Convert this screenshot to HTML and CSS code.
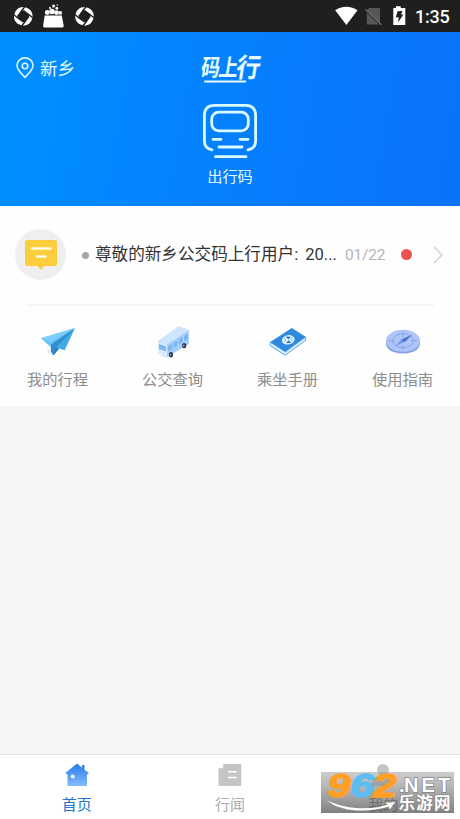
FILE: index.html
```html
<!DOCTYPE html>
<html lang="zh-CN">
<head>
<meta charset="utf-8">
<title>码上行</title>
<link rel="stylesheet" href="styles.css">
</head>
<body>
<div class="app">
  <header class="status">
    <svg width="100" height="32" viewBox="0 0 100 32">
      <defs>
        <path id="blade" d="M-8.800-2C-8-7.500-2.500-10.300 2-9L5.500-4.500C1.500-7-3-6.500-5.200-1.500z" fill="#fff"/>
        <g id="swirl">
          <use href="#blade"/><use href="#blade" transform="rotate(90)"/><use href="#blade" transform="rotate(180)"/><use href="#blade" transform="rotate(270)"/>
          <path d="M-9.500-1.500-4.500 2.500M9.500 1.500 4.500-2.500M1.500-9.500-2.500-4.500M-1.500 9.500 2.500 4.500" stroke="#1f1f1f" stroke-width="1.400"/>
        </g>
      </defs>
      <use href="#swirl" x="23.3" y="16.3"/>
      <use href="#swirl" x="84.5" y="16.3"/>
      <g fill="#fff">
        <path d="M44.7 15.5h17.1l1.9 10.3q.1 1.6-1.5 1.6H44.6q-1.6 0-1.5-1.6z"/>
        <circle cx="47.3" cy="12.5" r="2.4"/><circle cx="52" cy="11.5" r="2.7"/><circle cx="56.5" cy="12.6" r="2.4"/><circle cx="60.2" cy="12.8" r="1.9"/>
        <circle cx="50" cy="8" r="1.1"/><circle cx="53.6" cy="6" r="1.5"/><circle cx="56.8" cy="8.3" r="1.4"/><circle cx="57.3" cy="5" r=".7"/>
      </g>
      <path d="M45 15.2h16.5" stroke="#999" stroke-width=".6"/>
    </svg>
    <div class="status-right">
      <svg width="74" height="32" viewBox="0 0 74 32">
        <path d="M.2 10.3C6.5 5.5 16.2 5.5 22.5 10.3L11.4 25z" fill="#fff"/>
        <path d="M34 8h11v15.4L32.3 10.6zM31.8 12.5 44 24.4H31.8z" fill="#575757"/>
        <path d="m30.5 9.2 15.8 15.5" stroke="#6b6b6b" stroke-width="1.5"/>
        <path d="M58.3 8.1h2.6V6.3h4.8v1.8h4.6v16.8H58.3z" fill="#fff"/>
        <path d="m62.5 11.2 5-.3-1.5 3.7h2.4l-5.4 8 .8-5.4-3 .2z" fill="#1f1f1f"/>
      </svg>
      <span class="clock">1:35</span>
    </div>
  </header>

  <section class="hero">
    <div class="city">
      <svg width="18" height="22" viewBox="0 0 18 22" fill="none" stroke="#d9f8ff" stroke-width="1.6">
        <path d="M9 20.3C5.2 16.8 1 12.6 1 8.6a8 7.7 0 0 1 16 0c0 4-4.2 8.2-8 11.7z"/>
        <circle cx="9" cy="9" r="2.8"/>
      </svg>
      <span>新乡</span>
    </div>
    <div class="center">
      <svg class="brand" width="64" height="34" viewBox="0 0 64 34">
        <g transform="skewX(-9)">
          <text transform="translate(6 25) scale(.86 1.08)">码</text>
          <text transform="translate(24 25) scale(.86 1.06)">上</text>
          <text transform="translate(41 25.5) scale(1.1 1.2)">行</text>
          <path d="M11 30.500h42" stroke="#e5fbff" stroke-width="2"/>
        </g>
      </svg>
      <svg class="train" width="56" height="56" viewBox="0 0 56 56" fill="none" stroke="#d9fbff" stroke-width="2.8" stroke-linecap="round" stroke-linejoin="round">
        <path d="M10 46.8Q2.4 45.5 2.4 38V12.5Q2.4 2.4 12.5 2.4h31Q53.6 2.4 53.6 12.5V38q0 7.5-7.6 8.8"/>
        <rect x="9.7" y="9.2" width="36.6" height="18.6" rx="7"/>
        <path d="M11 36.3h8M38 36.3h8M17 44h23M13.5 53.7h30.5"/>
      </svg>
      <span class="code-label">出行码</span>
    </div>
  </section>

  <main class="card">
    <div class="notice">
      <div class="notice-icon">
        <svg width="34" height="32" viewBox="0 0 34 32">
          <path d="M3 1h28q2 0 2 2v22q0 2-2 2H20.5L17 30.7 13.5 27H3q-2 0-2-2V3q0-2 2-2z" fill="#fccd3d"/>
          <path d="M8 9.5h18.5M13 17.5h8.5" stroke="#fffbe5" stroke-width="2.5" stroke-linecap="round"/>
        </svg>
      </div>
      <i class="dot"></i>
      <span class="notice-text">尊敬的新乡公交码上行用户<span class="colon">:</span><span class="year">20...</span></span>
      <span class="date">01/22</span>
      <i class="unread"></i>
      <svg class="chevron" width="10" height="18" viewBox="0 0 10 18" fill="none" stroke="#d2d2d2" stroke-width="1.5"><path d="m1 1 8 8-8 8"/></svg>
    </div>
    <div class="divider"></div>
    <nav class="services">
      <a class="service">
        <svg width="40" height="34" viewBox="0 0 40 34">
          <path d="M9 21l5 7-4-1z" fill="#e9e9e9"/>
          <path d="M3 12.3 37 2 13 21.2z" fill="#63c1f3"/>
          <path d="M13 18.5 37 2 15.2 29.5 12.7 25z" fill="#338dcc"/>
          <path d="M18 21.5 37 2 26.7 24.2z" fill="#43aae8"/>
          <path d="m17.8 22 3 1.1-5.6 6.4z" fill="#257bb6"/>
          <path d="M3 12.3 13 16 37 2z" fill="#7acffb"/>
        </svg>
        <span>我的行程</span>
      </a>
      <a class="service">
        <svg width="40" height="34" viewBox="0 0 40 34">
          <path d="m7 30 6 2L36 18v-4z" fill="#e8eaf0"/>
          <path d="M5 15.5 25.5.5 35.8 4v14L14 31 5 27z" fill="#a5cef9"/>
          <path d="M5 15 25.5.4 36 4 14 18.5z" fill="#cee4ff"/>
          <path d="m5 15.5 9 3V31l-9-4z" fill="#d9ebff"/>
          <path d="m6 18 7 2.5v5L6 23z" fill="#7eb5f3"/>
          <path d="m15 20.2 20-12.6v5.2L15 25.5z" fill="#7eb6f3"/>
          <path d="M20 17v5.5M25.2 13.5v6M30.4 10.2V16" stroke="#bddcff"/>
          <ellipse cx="18" cy="28.8" rx="2.1" ry="2.7" fill="#27394e"/><ellipse cx="31.2" cy="19.6" rx="2.1" ry="2.7" fill="#27394e"/>
          <circle cx="17.6" cy="28.8" r=".8" fill="#b8c9db"/><circle cx="30.8" cy="19.6" r=".8" fill="#b8c9db"/>
        </svg>
        <span>公交查询</span>
      </a>
      <a class="service">
        <svg width="40" height="34" viewBox="0 0 40 34">
          <path d="m2.3 16.2 15 9.5L37.5 11v3.5L17.3 29.2 2.3 19.7z" fill="#d6efff" stroke="#3b94d9" stroke-width=".8"/>
          <path d="M2.3 16 23.8 2 37.6 10.7 17.3 25.7z" fill="#2e89df"/>
          <ellipse cx="20.3" cy="13.8" rx="6.4" ry="4.6" fill="#e7f7ff" transform="rotate(-12 20.3 13.8)"/>
          <path d="m17.5 10.5 5.5.2-2.6 2.8zM18 17.2l5.5-.4-3.1-2.6z" fill="#2676c6"/>
          <path d="m15.5 12 2.5 2-2 1.5M25 11.5l-2.3 2 2.1 1.5" fill="none" stroke="#5ea5e2" stroke-width=".8"/>
        </svg>
        <span>乘坐手册</span>
      </a>
      <a class="service">
        <svg width="40" height="34" viewBox="0 0 40 34">
          <path d="M3 14.5v3.2c0 6 7.6 9.8 17 9.8s17-3.8 17-9.8v-3.2z" fill="#87a3e6"/>
          <ellipse cx="20" cy="14.7" rx="17" ry="11" fill="#afc4f8"/>
          <ellipse cx="20" cy="14.7" rx="10.5" ry="7" fill="none" stroke="#87a6ec"/>
          <path d="M20 5.5v5M20 19v5M5.5 14.7h6M28.5 14.7h6" stroke="#84a3e9"/>
          <path d="m12.5 20 6-6.5L29 8.8l-6.2 6.8z" fill="#7797e2"/><path d="m18.5 13.5 2.5 2.8 8-7.5z" fill="#4c74cb"/>
        </svg>
        <span>使用指南</span>
      </a>
    </nav>
  </main>

  <footer class="tabs">
    <a class="tab active">
      <svg width="24" height="24" viewBox="0 0 24 24">
        <defs><linearGradient id="home" x2="0" y2="1"><stop stop-color="#267be8"/><stop offset="1" stop-color="#85bbff"/></linearGradient></defs>
        <path d="M12 .5 17 4.7V2h2.5v4.8L23.8 10l-1 1.2H22V23H2.5V11.2h-1L.4 10z" fill="url(#home)"/>
        <circle cx="7.8" cy="13.5" r="2" fill="#e7faff"/>
      </svg>
      <span>首页</span>
    </a>
    <a class="tab">
      <svg width="24" height="24" viewBox="0 0 24 24">
        <path d="M6.2 1H22q1.3 0 1.3 1.3v19.4q0 1.3-1.3 1.3H1.8Q.5 23 .5 21.7V5.3h4.6V2.1Q5.1 1 6.2 1z" fill="#c5c5c5"/>
        <path d="M10 8.7h8.5M10 14.5h8.5" stroke="#fff" stroke-width="1.5"/>
      </svg>
      <span>行闻</span>
    </a>
    <a class="tab">
      <svg width="24" height="24" viewBox="0 0 24 24" fill="#c5c5c5"><circle cx="12" cy="7" r="6"/><path d="M1 23v-3q0-6 6-6h10q6 0 6 6v3z"/></svg>
      <span class="mine">我的</span>
    </a>
  </footer>

  <div class="watermark">
    <svg width="133" height="41" viewBox="0 0 133 41">
      <defs><linearGradient id="wm" x2="0" y2="1"><stop stop-color="#999" stop-opacity=".5"/><stop offset="1" stop-color="#5c5c5c" stop-opacity=".78"/></linearGradient></defs>
      <rect width="133" height="41" fill="url(#wm)"/>
      <text class="wm-number" transform="translate(6.5 24.5) scale(1.25 1)"><tspan class="orange">9</tspan><tspan class="blue">6</tspan><tspan class="orange">2</tspan></text>
      <text class="wm-net" x="78" y="19.500"><tspan>.</tspan><tspan x="83">N</tspan><tspan x="100.500">E</tspan><tspan x="117">T</tspan></text>
      <text class="wm-site" x="77.5" y="37" textLength="52">乐游网</text>
      <path d="M6 28.5c18 8.500 42 10.500 61 4l-3.500-1.500 10.500-1-5.500 8-.5-3.500C46 41.500 19 39.500 6 28.500z" fill="#fff"/>
    </svg>
  </div>
</div>
</body>
</html>
```
FILE: styles.css
```css
* { box-sizing: border-box; }
body { margin: 0; }
.app {
  position: relative;
  display: flex;
  flex-direction: column;
  width: 460px;
  height: 819px;
  overflow: hidden;
  background: #f6f6f6;
  font-family: Roboto, "Noto Sans CJK SC", sans-serif;
}
svg { display: block; flex: none; }
.status {
  display: flex;
  justify-content: space-between;
  height: 32px;
  padding-right: 10px;
  background: #1f1f1f;
}
.status-right { display: flex; align-items: center; gap: 6px; }
.clock { color: #fff; font-size: 18px; font-weight: 500; line-height: 32px; width: 35px; padding-top: 2px; white-space: nowrap; letter-spacing: -.2px; }

.hero {
  display: grid;
  grid-template-columns: 130px 200px 130px;
  height: 174px;
  background: linear-gradient(100deg, #008eff 5%, #0b72fb 95%);
  color: #e2faff;
}
.city {
  display: flex;
  align-items: center;
  gap: 6px;
  height: 22px;
  margin: 25px 0 0 16px;
  font-size: 17.6px;
}
.city span { margin-top: -2px; }
.center { display: flex; flex-direction: column; align-items: center; }
.brand { margin-top: 19px; overflow: visible; font: 700 22px "Noto Sans CJK SC", sans-serif; fill: #e5fbff; }
.train { margin-top: 18px; }
.code-label { margin-top: 7px; font-size: 15.2px; line-height: 22px; }

.card { height: 200px; background: #fefefe; }
.notice { display: flex; align-items: center; height: 98px; padding-left: 15px; }
.notice-icon {
  display: grid;
  place-items: center;
  width: 51px;
  height: 51px;
  margin-top: -1px;
  border-radius: 50%;
  background: #efefef;
}
.dot { width: 7px; height: 7px; margin-left: 16px; border-radius: 50%; background: #a5a5a5; }
.notice-text { width: 250px; margin: -4px 0 0 6px; color: #333; font-size: 16.6px; white-space: nowrap; }
.colon { margin-right: 7px; }
.date { width: 41px; color: #b5b5b5; font-size: 15.5px; letter-spacing: -.2px; }
.unread { width: 11px; height: 11px; margin: -1px 0 0 15px; border-radius: 50%; background: #ed524d; }
.chevron { margin-left: 21px; }
.divider { height: 2px; margin: 0 26px; background: #f5f5f5; }
.services { display: grid; grid-template-columns: repeat(4, 1fr); padding-top: 20px; }
.service { display: flex; flex-direction: column; align-items: center; gap: 8px; color: #8d8d8d; font-size: 15.3px; line-height: 24px; }

.tabs {
  display: grid;
  grid-template-columns: repeat(3, 1fr);
  height: 65px;
  margin-top: auto;
  border-top: 1px solid #e2e2e2;
  background: #fff;
}
.tab { display: flex; flex-direction: column; align-items: center; padding-top: 8px; color: #aaa; font-size: 15px; line-height: 22px; gap: 7px; }
.tab span { height: 22px; }
.tab .mine { color: #777; }
.active { color: #2875cc; }
.watermark { position: absolute; right: 6px; bottom: 6px; }
.watermark svg { overflow: visible; }
.wm-number { font: italic bold 33px "Liberation Sans", sans-serif; stroke-width: 1.5px; }
.orange { fill: #ff9f26; stroke: #ff9f26; }
.blue { fill: #5dbdf1; stroke: #5dbdf1; }
.wm-net { font: bold 20px "Liberation Sans", sans-serif; fill: #fff; stroke: #888; stroke-width: 1.5px; paint-order: stroke; }
.wm-site { font: bold 16.5px "Noto Sans CJK SC", sans-serif; fill: #fff; stroke: #888; stroke-width: 1.5px; paint-order: stroke; }
```
